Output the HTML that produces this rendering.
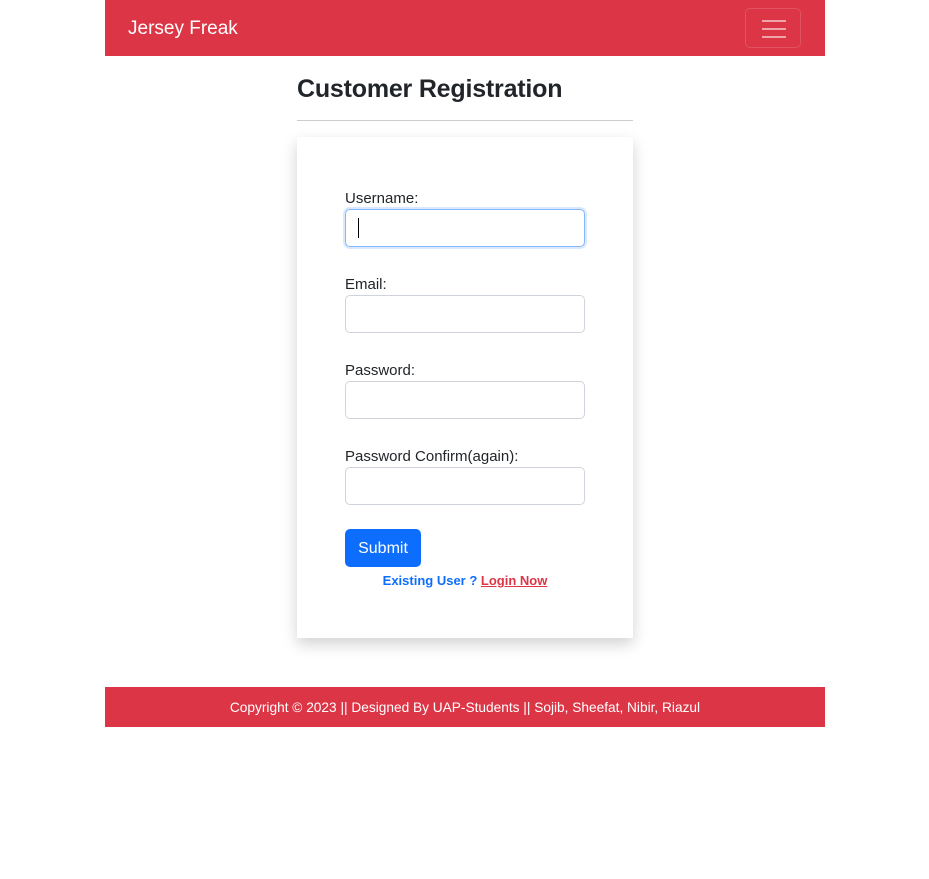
<!DOCTYPE html>
<html><head><meta charset="utf-8"><style>
*{box-sizing:border-box}
body{margin:0;background:#fff;font-family:"Liberation Sans",sans-serif;color:#212529;width:929px;height:879px;position:relative;overflow:hidden}
.nav{position:absolute;left:105px;top:0;width:720px;height:56px;background:#dc3545}
.brand{position:absolute;left:23px;top:18px;color:#fff;font-size:19px}
.tog{position:absolute;left:640px;top:8px;width:56px;height:40px;border:1px solid rgba(255,255,255,.15);border-radius:5px}
.tog i{position:absolute;left:16px;width:24px;height:2px;background:rgba(255,255,255,.55)}
h2{position:absolute;left:297px;top:75px;margin:0;font-size:25px;font-weight:600;letter-spacing:-0.2px}
.hr{position:absolute;left:297px;top:120px;width:336px;height:1px;background:#ccc}
.card{position:absolute;left:297px;top:137px;width:336px;height:501px;background:#fff;box-shadow:0 6px 14px rgba(0,0,0,.18)}
label{position:absolute;left:48px;font-size:15px}
.in{position:absolute;left:48px;width:240px;height:38px;border:1px solid #ced4da;border-radius:5px}
.btn{position:absolute;left:48px;top:392px;width:76px;height:38px;background:#0d6efd;border-radius:5px;color:#fff;font-size:16px;text-align:center;line-height:39px}
.ex{position:absolute;left:0;width:336px;top:436px;text-align:center;font-size:13px;font-weight:bold;color:#0d6efd}
.ex a{color:#dc3545;text-decoration:underline}
.foot{position:absolute;left:105px;top:687px;width:720px;height:40px;background:#dc3545;color:#fff;font-size:13.7px;text-align:center;line-height:42px}
</style></head><body>
<div class="nav"><div class="brand">Jersey Freak</div><div class="tog"><i style="top:11px"></i><i style="top:19px"></i><i style="top:27px"></i></div></div>
<h2>Customer Registration</h2>
<div class="hr"></div>
<div class="card">
<label style="top:53px">Username:</label>
<div class="in" style="top:72px;border-color:#86b7fe;box-shadow:0 0 0 2px rgba(13,110,253,.15)"><div style="position:absolute;left:12px;top:8px;width:1px;height:20px;background:#000"></div></div>
<label style="top:139px">Email:</label>
<div class="in" style="top:158px"></div>
<label style="top:225px">Password:</label>
<div class="in" style="top:244px"></div>
<label style="top:311px">Password Confirm(again):</label>
<div class="in" style="top:330px"></div>
<div class="btn">Submit</div>
<div class="ex">Existing User ? <a>Login Now</a></div>
</div>
<div class="foot">Copyright © 2023 || Designed By UAP-Students || Sojib, Sheefat, Nibir, Riazul</div>
</body></html>
